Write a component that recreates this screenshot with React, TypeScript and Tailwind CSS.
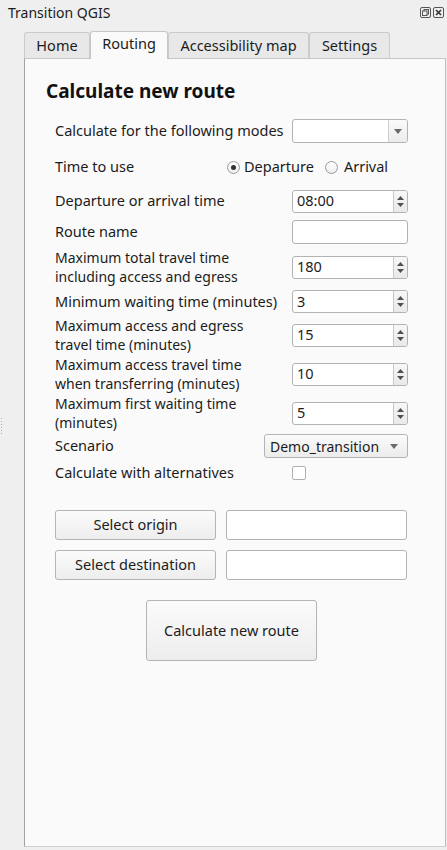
import React from "react";

const font = { fontFamily: '"Noto Sans", "DejaVu Sans", sans-serif' };

const Spin = ({ value }: { value: string }) => (
  <div className="flex h-[23px] w-[116px] overflow-hidden rounded-[3px] border border-[#b3b3b3] bg-white">
    <div className="flex flex-1 items-center pl-[4px] text-[14.5px] text-[#1c1c1c]">{value}</div>
    <div className="flex w-[14px] flex-col items-center justify-center gap-[3px] border-l border-[#c8c8c8] bg-gradient-to-b from-[#f7f7f7] to-[#e9e9e9]">
      <svg width="7" height="4" viewBox="0 0 7 4">
        <path d="M0 4 L3.5 0 L7 4 Z" fill="#505050" />
      </svg>
      <svg width="7" height="4" viewBox="0 0 7 4">
        <path d="M0 0 L3.5 4 L7 0 Z" fill="#505050" />
      </svg>
    </div>
  </div>
);

const Caret = () => (
  <svg width="8" height="5" viewBox="0 0 8 5">
    <path d="M0 0 L4 5 L8 0 Z" fill="#6b6b6b" />
  </svg>
);

const Row = ({
  label,
  h,
  mt,
  children,
}: {
  label: React.ReactNode;
  h: number;
  mt: number;
  children?: React.ReactNode;
}) => (
  <div className="flex items-center" style={{ height: h, marginTop: mt }}>
    <div className="w-[237px] text-[14.5px] text-[#1c1c1c]">{label}</div>
    <div className="flex flex-1 items-center">{children}</div>
  </div>
);

// two line label, a touch tighter than the single line ones
const Two = ({ a, b }: { a: string; b: string }) => (
  <div className="text-[14px] leading-[19px]">
    {a}
    <br />
    {b}
  </div>
);

const Button = ({ children, className }: { children: React.ReactNode; className: string }) => (
  <div
    className={`flex items-center justify-center rounded-[3px] border border-[#b4b4b4] bg-gradient-to-b from-[#fbfbfb] to-[#ededed] text-[14.5px] text-[#1c1c1c] ${className}`}
  >
    {children}
  </div>
);

const Tab = ({ label, active, className }: { label: string; active?: boolean; className: string }) => (
  <div
    className={`flex items-center justify-center rounded-t-[3px] border border-b-0 text-[14.5px] text-[#1c1c1c] ${
      active
        ? "relative z-10 -mb-[1px] h-[28px] border-[#c6c6c6] bg-[#fafafa] pb-[3px]"
        : "h-[26px] border-[#cbcbcb] bg-[#e8e8e8]"
    } ${className}`}
  >
    {label}
  </div>
);

export default function App() {
  return (
    <div className="relative h-[850px] w-[447px] overflow-hidden bg-[#efefef]" style={font}>
      {/* title bar */}
      <div className="flex h-[24px] items-center justify-between pl-[8px] pr-[3px]">
        <span className="text-[14px] text-[#1c1c1c]">Transition QGIS</span>
        <div className="flex gap-[2px]">
          <svg width="11" height="11" viewBox="0 0 11 11">
            <rect x="0.5" y="0.5" width="10" height="10" rx="1.5" fill="none" stroke="#555" />
            <rect x="4" y="2.5" width="4.5" height="4.5" fill="none" stroke="#555" />
            <rect x="2.5" y="4" width="4.5" height="4.5" fill="#efefef" stroke="#555" />
          </svg>
          <svg width="11" height="11" viewBox="0 0 11 11">
            <rect x="0.5" y="0.5" width="10" height="10" rx="1.5" fill="none" stroke="#555" />
            <path d="M3 3 L8 8 M8 3 L3 8" stroke="#333" strokeWidth="1.6" />
          </svg>
        </div>
      </div>

      {/* tabs */}
      <div className="mt-[7px] flex h-[27px] items-end pl-[24px]">
        <Tab label="Home" className="w-[66px]" />
        <Tab label="Routing" active className="w-[78px]" />
        <Tab label="Accessibility map" className="w-[141px]" />
        <Tab label="Settings" className="w-[81px]" />
      </div>

      {/* splitter dots */}
      <div className="absolute left-[1px] top-[418px] flex flex-col gap-[2px]">
        {[0, 1, 2, 3, 4, 5].map((i) => (
          <div key={i} className="h-[1px] w-[1px] bg-[#b0b0b0]" />
        ))}
      </div>

      {/* panel */}
      <div className="ml-[24px] mr-[1px] h-[789px] border border-t-[#c6c6c6] border-l-[#a3a3a3] border-r-[#bdbdbd] border-b-[#d0d0d0] bg-[#fafafa]">
        <div className="ml-[21px] mt-[20px] text-[19px] font-bold leading-[24px] text-[#111]">
          Calculate new route
        </div>

        <div className="pl-[30px]">
          <Row label="Calculate for the following modes" h={24} mt={16}>
            <div className="flex h-[24px] w-[116px] overflow-hidden rounded-[3px] border border-[#b3b3b3] bg-white">
              <div className="flex-1" />
              <div className="flex w-[19px] items-center justify-center border-l border-[#cfcfcf] bg-gradient-to-b from-[#fafafa] to-[#ececec]">
                <Caret />
              </div>
            </div>
          </Row>

          <div className="flex h-[24px] items-center text-[14.5px] text-[#1c1c1c]" style={{ marginTop: 12 }}>
            <div className="w-[172px]">Time to use</div>
            <div className="flex items-center gap-[4px]">
              <div className="flex h-[13px] w-[13px] items-center justify-center rounded-full border border-[#9a9a9a] bg-gradient-to-b from-white to-[#ededed]">
                <div className="h-[5px] w-[5px] rounded-full bg-[#333]" />
              </div>
              <span>Departure</span>
            </div>
            <div className="ml-[11px] flex items-center gap-[6px]">
              <div className="h-[13px] w-[13px] rounded-full border border-[#9a9a9a] bg-gradient-to-b from-white to-[#ededed]" />
              <span>Arrival</span>
            </div>
          </div>

          <Row label="Departure or arrival time" h={24} mt={10}>
            <Spin value="08:00" />
          </Row>

          <Row label="Route name" h={24} mt={7}>
            <div className="h-[24px] w-[116px] rounded-[3px] border border-[#b3b3b3] bg-white" />
          </Row>

          <Row label={<Two a="Maximum total travel time" b="including access and egress" />} h={34} mt={6}>
            <Spin value="180" />
          </Row>

          <Row label="Minimum waiting time (minutes)" h={23} mt={6}>
            <Spin value="3" />
          </Row>

          <Row label={<Two a="Maximum access and egress" b="travel time (minutes)" />} h={34} mt={5}>
            <Spin value="15" />
          </Row>

          <Row label={<Two a="Maximum access travel time" b="when transferring (minutes)" />} h={34} mt={5}>
            <Spin value="10" />
          </Row>

          <Row label={<Two a="Maximum first waiting time" b="(minutes)" />} h={34} mt={5}>
            <Spin value="5" />
          </Row>

          <div className="flex h-[24px] items-center text-[14.5px] text-[#1c1c1c]" style={{ marginTop: 4 }}>
            <div className="w-[209px]">Scenario</div>
            <div className="flex h-[24px] w-[144px] items-center justify-between rounded-[3px] border border-[#b3b3b3] bg-gradient-to-b from-[#fbfbfb] to-[#ececec] pl-[5px] pr-[9px] text-[14px]">
              <span>Demo_transition</span>
              <Caret />
            </div>
          </div>

          <Row label="Calculate with alternatives" h={18} mt={6}>
            <div className="h-[14px] w-[14px] rounded-[2px] border border-[#b0b0b0] bg-white" />
          </Row>

          <div className="mt-[28px] flex h-[30px] gap-[10px]">
            <Button className="w-[161px]">Select origin</Button>
            <div className="w-[181px] rounded-[3px] border border-[#b3b3b3] bg-white" />
          </div>
          <div className="mt-[10px] flex h-[30px] gap-[10px]">
            <Button className="w-[161px]">Select destination</Button>
            <div className="w-[181px] rounded-[3px] border border-[#b3b3b3] bg-white" />
          </div>

          <Button className="ml-[91px] mt-[20px] h-[61px] w-[171px]">Calculate new route</Button>
        </div>
      </div>
    </div>
  );
}
